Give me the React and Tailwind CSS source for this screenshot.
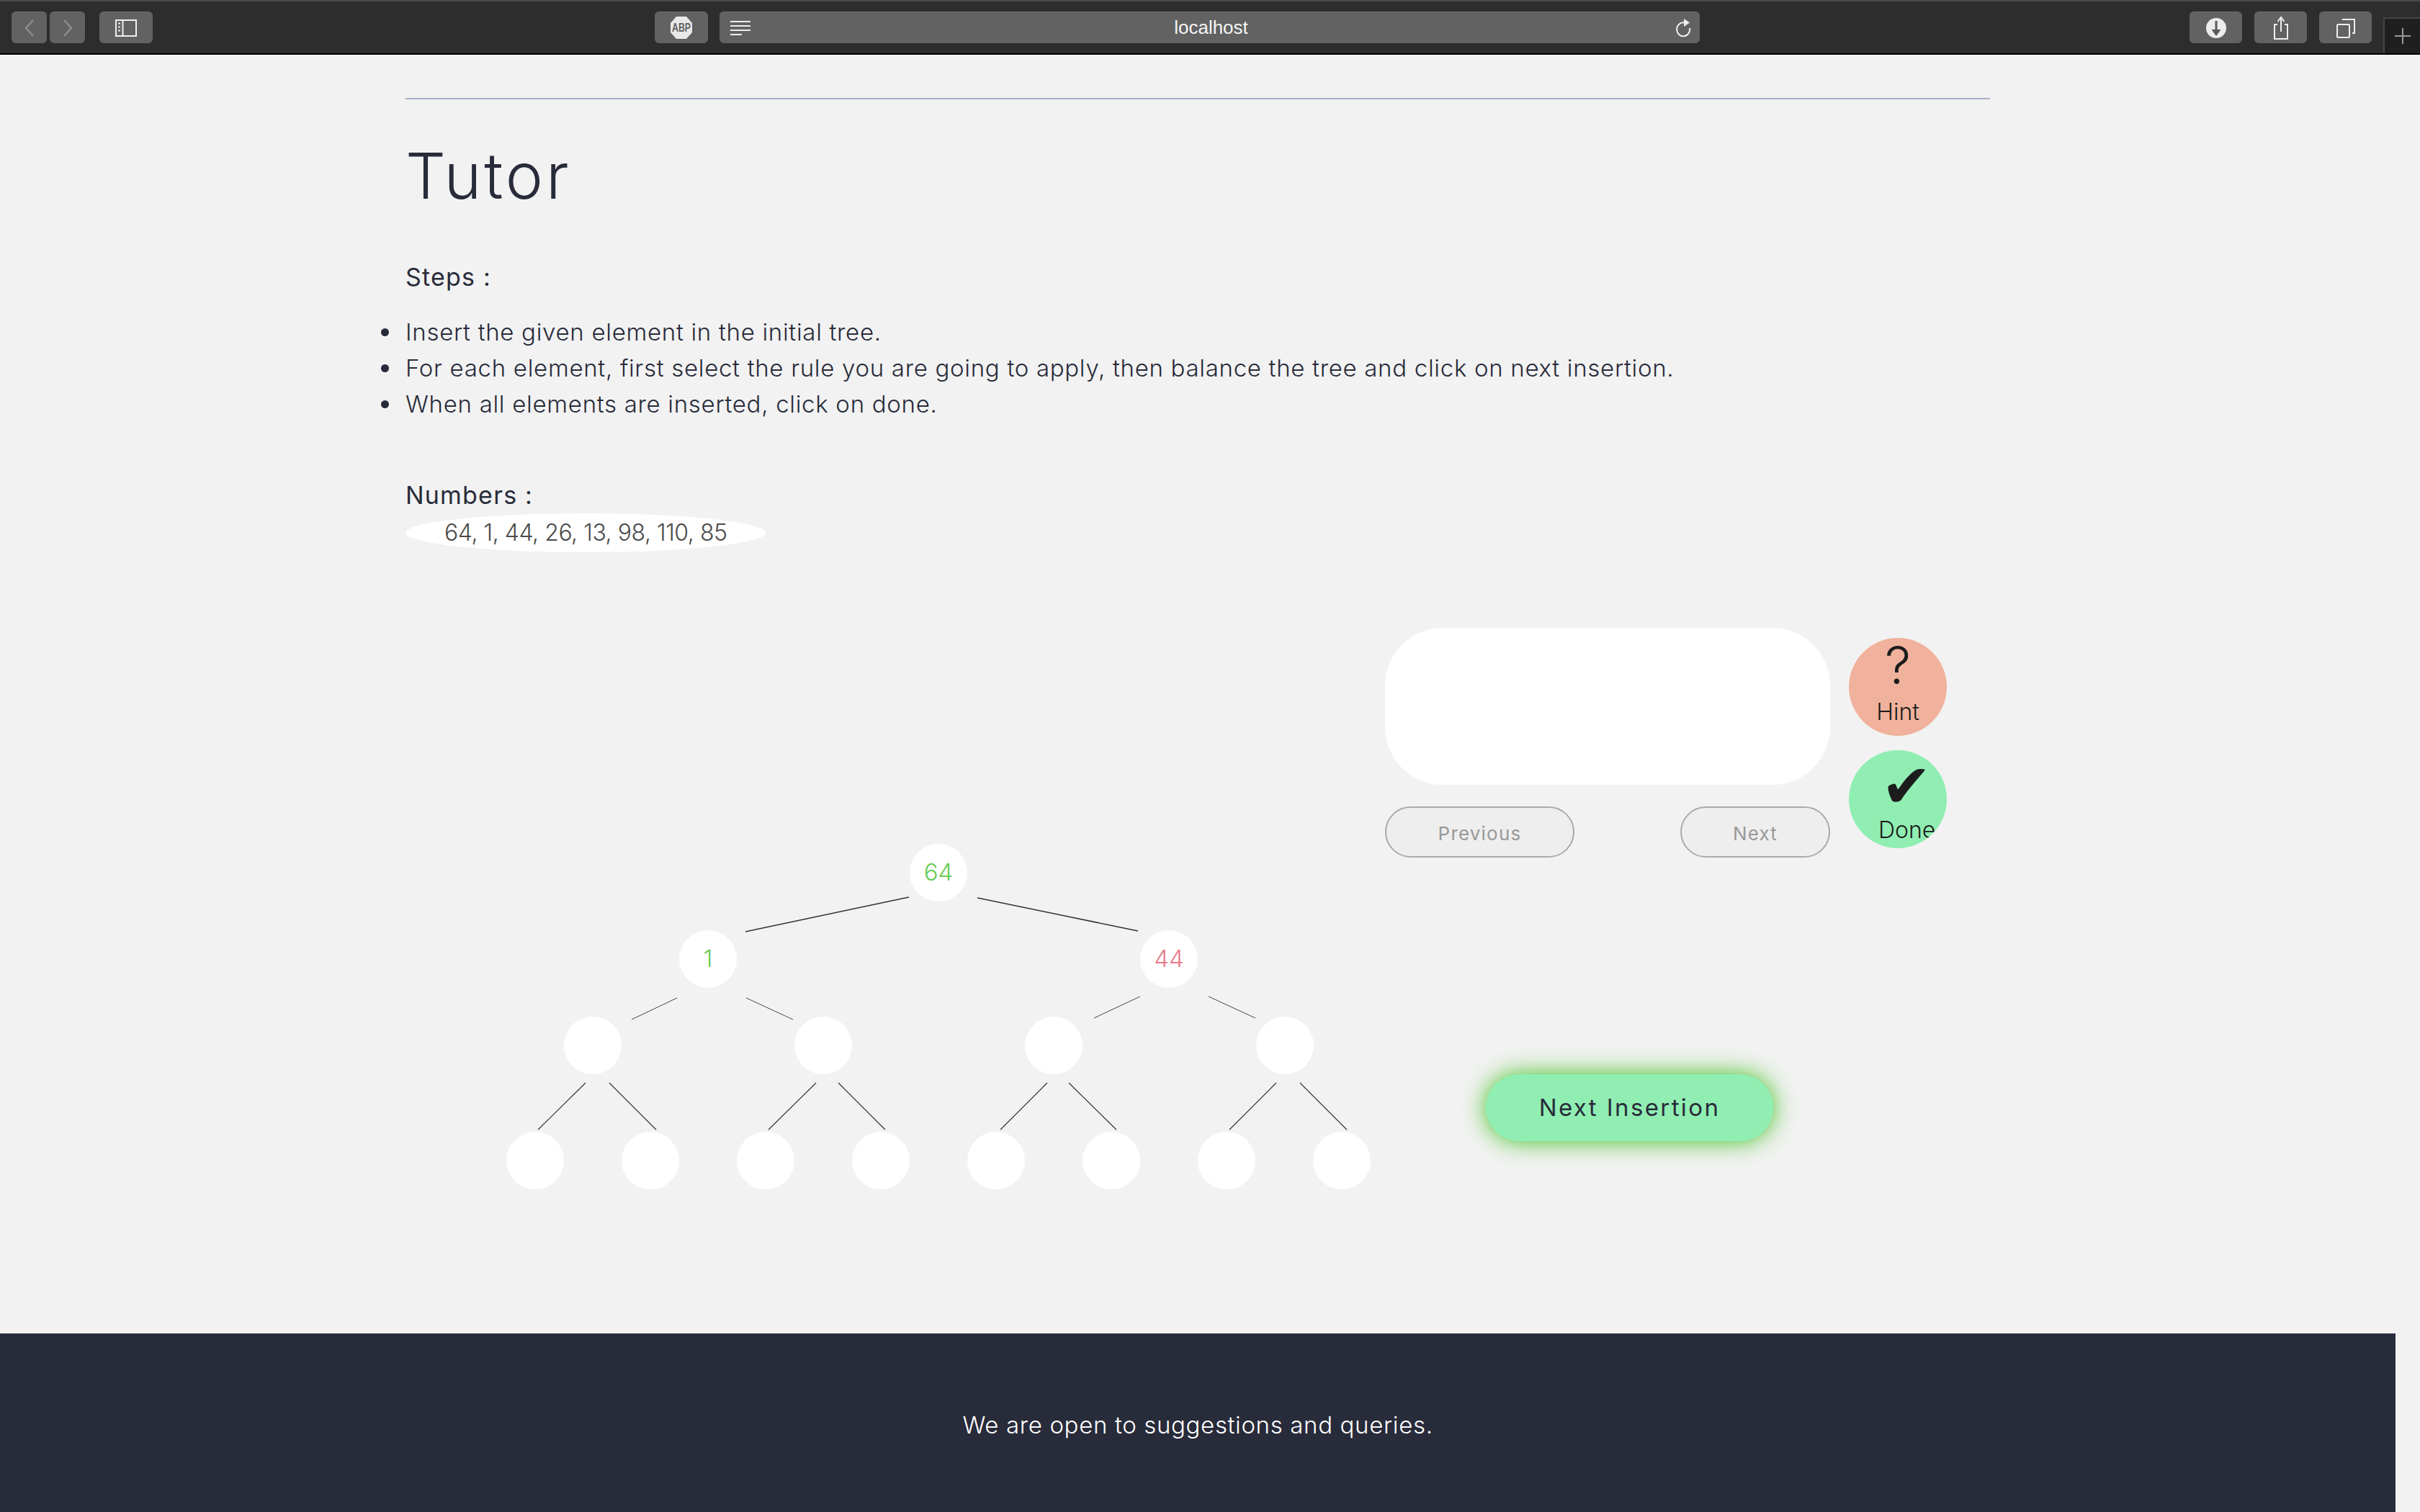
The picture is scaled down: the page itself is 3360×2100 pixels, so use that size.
import React from 'react';

const nodes = [
  { x: 1303, y: 1212, label: '64', color: 'text-[#66cc55]' },
  { x: 983, y: 1332, label: '1', color: 'text-[#66cc55]' },
  { x: 1623, y: 1332, label: '44', color: 'text-[#e87a88]' },
  { x: 823, y: 1452 }, { x: 1143, y: 1452 }, { x: 1463, y: 1452 }, { x: 1784, y: 1452 },
  { x: 743, y: 1612 }, { x: 903, y: 1612 }, { x: 1063, y: 1612 }, { x: 1223, y: 1612 },
  { x: 1383, y: 1612 }, { x: 1543, y: 1612 }, { x: 1703, y: 1612 }, { x: 1863, y: 1612 },
];

const edges = [
  [1035, 1294, 1262, 1246, 1.5], [1357, 1247, 1580, 1293, 1.5],
  [877, 1416, 940, 1386, 0.9], [1036, 1386, 1101, 1416, 0.9],
  [1519, 1414, 1583, 1384, 0.9], [1678, 1384, 1743, 1414, 0.9],
  [813, 1504, 747, 1569, 1.2], [846, 1504, 911, 1569, 1.2],
  [1133, 1504, 1067, 1569, 1.2], [1164, 1504, 1229, 1569, 1.2],
  [1454, 1504, 1389, 1569, 1.2], [1484, 1504, 1550, 1569, 1.2],
  [1772, 1504, 1707, 1569, 1.2], [1805, 1504, 1870, 1569, 1.2],
];

const steps = [
  'Insert the given element in the initial tree.',
  'For each element, first select the rule you are going to apply, then balance the tree and click on next insertion.',
  'When all elements are inserted, click on done.',
];

const ToolButton = ({ className, children }) => (
  <div className={`h-[44px] bg-[#626262] rounded-[6px] border-t border-[#6e6e6e] flex items-center justify-center shrink-0 ${className}`}>
    {children}
  </div>
);

const Toolbar = () => (
  <div className="h-[76px] bg-[#2d2d2d] border-t-2 border-t-[#4a4a4a] border-b-2 border-b-black flex items-start pt-[14px] relative">
    <ToolButton className="w-[49px] ml-[16px]">
      <svg width="16" height="26" viewBox="0 0 16 26" fill="none" stroke="#8f8f8f" strokeWidth="2.4"><path d="M13 2 3 13l10 11" /></svg>
    </ToolButton>
    <ToolButton className="w-[49px] ml-[4px]">
      <svg width="16" height="26" viewBox="0 0 16 26" fill="none" stroke="#8f8f8f" strokeWidth="2.4"><path d="M3 2l10 11L3 24" /></svg>
    </ToolButton>
    <ToolButton className="w-[74px] ml-[20px]">
      <svg width="30" height="24" viewBox="0 0 30 24" fill="none" stroke="#f0f0f0" strokeWidth="2">
        <rect x="1" y="1" width="28" height="22" />
        <path d="M10.5 1v22" />
        <path d="M4 5.5h3M4 10.5h3M4 15.5h3" strokeWidth="2" />
      </svg>
    </ToolButton>
    <ToolButton className="w-[74px] ml-[697px]">
      <svg width="32" height="33" viewBox="0 0 32 33">
        <path d="M9 1h14l8 9v13l-8 9H9l-8-9V10z" fill="#e8e8e8" />
        <text x="16" y="22" textAnchor="middle" textLength="26" lengthAdjust="spacingAndGlyphs" fontFamily="'Liberation Sans',sans-serif" fontSize="17" fontWeight="700" fill="#626262">ABP</text>
      </svg>
    </ToolButton>
    <ToolButton className="w-[1361px] ml-[16px] pl-[4px] relative text-[#f5f5f5] text-[26px] font-['Liberation_Sans',sans-serif]">
      <svg className="absolute left-[14px] top-[11px]" width="30" height="22" viewBox="0 0 30 22" fill="none" stroke="#eeeeee" strokeWidth="2">
        <path d="M1 2h28M1 8h28M1 14h28M1 20h16" />
      </svg>
      localhost
      <svg className="absolute right-[11px] top-[8px]" width="24" height="28" viewBox="0 0 24 28" fill="none" stroke="#eeeeee" strokeWidth="2">
        <path d="M14 6.5A9 9.5 0 1 0 21 14" />
        <path d="M13 1l8 5.500-8 5.500z" fill="#eeeeee" stroke="none" />
      </svg>
    </ToolButton>
    <ToolButton className="w-[73px] ml-[680px]">
      <svg width="28" height="30" viewBox="0 0 28 30">
        <circle cx="14" cy="15" r="14" fill="#ececec" />
        <path d="M12.500 5h3v12h5L14 26l-6.500-9h5z" fill="#5a5a5a" />
      </svg>
    </ToolButton>
    <ToolButton className="w-[73px] ml-[17px]">
      <svg width="24" height="34" viewBox="0 0 24 34" fill="none" stroke="#eeeeee" strokeWidth="2">
        <path d="M7 12H3v20h18V12h-4" />
        <path d="M12 22V3M7.500 8 12 2l4.500 6" />
      </svg>
    </ToolButton>
    <ToolButton className="w-[73px] ml-[17px]">
      <svg width="28" height="28" viewBox="0 0 28 28" fill="none" stroke="#eeeeee" strokeWidth="2">
        <rect x="2" y="9" width="17" height="18" rx="1.500" />
        <path d="M9 2h17v19h-3" />
      </svg>
    </ToolButton>
    <div className="absolute right-0 top-[22px] w-[51px] h-[50px] bg-[#1f1f1f] border-l-2 border-t-2 border-[#454545] flex items-center justify-center">
      <svg width="24" height="24" viewBox="0 0 24 24" stroke="#9a9a9a" strokeWidth="2"><path d="M12 1v22M1 12h22" /></svg>
    </div>
  </div>
);

const Tree = () => (
  <div className="relative w-[1360px] h-[980px] shrink-0">
    <svg className="absolute left-0 top-0" width="1360" height="980" viewBox="563 872 1360 980" stroke="#333333">
      {edges.map((e, i) => (
        <line key={i} x1={e[0]} y1={e[1]} x2={e[2]} y2={e[3]} strokeWidth={e[4]} />
      ))}
    </svg>
    {nodes.map((n, i) => (
      <div
        key={i}
        className={`absolute w-[80px] h-[80px] rounded-full bg-white flex items-center justify-center text-[33px] font-light ${n.color || ''}`}
        style={{ left: n.x - 563 - 40, top: n.y - 872 - 40 }}
      >
        {n.label}
      </div>
    ))}
  </div>
);

const SidePanel = () => (
  <div className="flex flex-col items-start">
    <div className="flex items-start">
      <div className="w-[618px]">
        <div className="h-[218px] bg-white rounded-[80px]" />
        <div className="flex justify-between mt-[30px]">
          <button className="w-[263px] h-[71px] pt-[3px] rounded-full bg-[#eeeeee] border-2 border-[#aaaaaa] text-[#999999] text-[26px] tracking-[1.200px]">Previous</button>
          <button className="w-[208px] h-[71px] pt-[3px] rounded-full bg-[#eeeeee] border-2 border-[#aaaaaa] text-[#999999] text-[26px] tracking-[1.200px]">Next</button>
        </div>
      </div>
      <div className="ml-[26px] mt-[14px] flex flex-col gap-[20px]">
        <div className="w-[136px] h-[136px] rounded-full bg-[#f0b29c] flex flex-col items-center text-[#1c1c1c]">
          <span className="text-[72px] leading-[72px] font-light mt-[2px]">?</span>
          <span className="text-[32px] leading-[36px] font-light mt-[11px]">Hint</span>
        </div>
        <div className="w-[136px] h-[136px] rounded-full bg-[#90eeb2] overflow-hidden text-[#1c1c1c]">
          <div className="text-[84px] leading-[84px] text-center font-['DejaVu_Sans',sans-serif] mt-[8px] pl-[24px]">✔</div>
          <div className="text-[32px] leading-[36px] font-light pl-[41px] mt-[1px] whitespace-nowrap">Done</div>
        </div>
      </div>
    </div>
    <button className="ml-[140px] mt-[301px] w-[399px] h-[93px] rounded-full bg-[#90eeb2] shadow-[0_0_34px_#40c020] text-[#282b3a] text-[33px] tracking-[2.400px]">
      Next Insertion
    </button>
  </div>
);

export default function App() {
  return (
    <div className="min-h-screen bg-[#f2f2f2] text-[#282b3a] font-['Inter',sans-serif]">
      <Toolbar />
      <div className="ml-[563px] w-[2200px]">
        <div className="h-[2px] bg-[#a9b0c8] mt-[60px]" />
        <h1 className="text-[88px] leading-[100px] font-light mt-[56px] tracking-[4px]">Tutor</h1>
        <p className="text-[34px] leading-[50px] mt-[66px] tracking-[1.200px]">Steps :</p>
        <ul className="-ml-[34px] text-[33px] leading-[50px] font-light mt-[26px] tracking-[0.700px]">
          {steps.map((s) => (
            <li key={s} className="flex items-center">
              <span className="w-[11px] h-[11px] rounded-full bg-[#282b3a] mr-[23px] shrink-0" />
              <span>{s}</span>
            </li>
          ))}
        </ul>
        <p className="text-[34px] leading-[50px] mt-[77px] tracking-[1.200px]">Numbers :</p>
        <div className="w-[500px] h-[54px] rounded-[50%] bg-white text-[#4a4a4a] text-[32px] font-light leading-[54px] pl-[54px] tracking-[-0.450px] whitespace-nowrap">
          64, 1, 44, 26, 13, 98, 110, 85
        </div>
      </div>
      <div className="ml-[563px] mt-[105px] flex items-start">
        <Tree />
        <SidePanel />
      </div>
      <div className="w-[3326px] h-[248px] bg-[#282b3a] flex items-center justify-center pt-[8px] text-white text-[33px] font-light tracking-[0.650px]">
        We are open to suggestions and queries.
      </div>
    </div>
  );
}
